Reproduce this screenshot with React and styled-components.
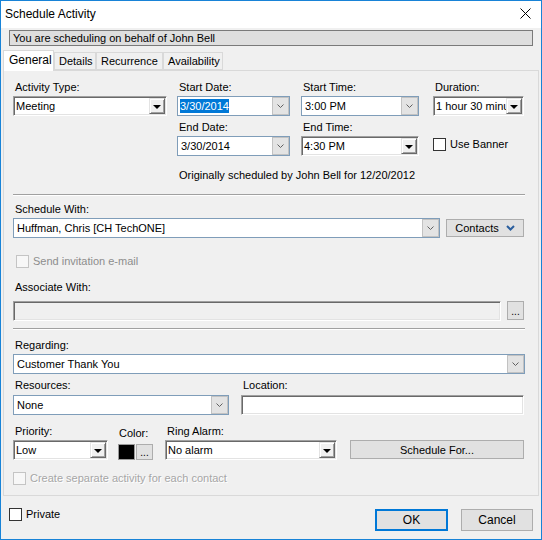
import styled, { createGlobalStyle } from "styled-components";

const GlobalStyle = createGlobalStyle`
  html, body { margin: 0; padding: 0; background: #fff; }
  body {
    font-family: "Liberation Sans", Arial, sans-serif;
    font-size: 11px;
    color: #000;
  }
  * { box-sizing: border-box; }
`;

const Window = styled.div`
  width: 542px;
  height: 540px;
  border: 1px solid #1883d7;
  background: #f0f0f0;
  display: flex;
  flex-direction: column;
  overflow: hidden;
`;

const TitleBar = styled.div`
  height: 27px;
  flex-shrink: 0;
  background: #fff;
  display: flex;
  align-items: center;
  justify-content: space-between;
  padding: 0 10px 2px 4px;
  font-size: 12px;
`;

const Close = styled.div`
  width: 11px;
  height: 11px;
  display: flex;
`;

const Banner = styled.div`
  margin: 2px 8px 0 8px;
  height: 16px;
  border: 1px solid #7a7a7a;
  background: #dedede;
  padding-left: 3px;
  line-height: 14px;
  white-space: nowrap;
`;

const TabStrip = styled.div`
  margin-top: 4px;
  height: 21px;
  padding-left: 2px;
  display: flex;
  align-items: flex-end;
`;

const Tab = styled.div`
  position: relative;
  width: ${(p) => p.$w}px;
  height: ${(p) => (p.$active ? 21 : 18)}px;
  margin-bottom: ${(p) => (p.$active ? 0 : 1)}px;
  border: 1px solid #d9d9d9;
  border-bottom: ${(p) => (p.$active ? "none" : "1px solid #d9d9d9")};
  background: ${(p) => (p.$active ? "#fff" : "#f0f0f0")};
  z-index: ${(p) => (p.$active ? 2 : 0)};
  padding-left: ${(p) => (p.$active ? 5 : 4)}px;
  line-height: ${(p) => (p.$active ? 18 : 16)}px;
  font-size: ${(p) => (p.$active ? 12 : 11)}px;
  white-space: nowrap;
`;

const Panel = styled.div`
  position: relative;
  z-index: 1;
  margin: -1px 2px 0 2px;
  height: 426px;
  flex-shrink: 0;
  border: 1px solid #d9d9d9;
  background: #f0f0f0;
  padding: 9px 13px 0 9px;
`;

const Row = styled.div`
  display: flex;
  align-items: ${(p) => p.$align || "flex-start"};
  margin-top: ${(p) => p.$mt || 0}px;
`;

const Column = styled.div`
  display: flex;
  flex-direction: column;
  width: ${(p) => p.$w}px;
  margin-left: ${(p) => p.$ml || 0}px;
  flex-shrink: 0;
`;

const Label = styled.div`
  height: 14px;
  line-height: 14px;
  padding-left: ${(p) => (p.$pl === undefined ? 2 : p.$pl)}px;
  margin-top: ${(p) => p.$mt || 0}px;
  margin-bottom: ${(p) => (p.$mb === undefined ? 2 : p.$mb)}px;
  white-space: nowrap;
`;

const ClassicBox = styled.div`
  display: flex;
  align-items: stretch;
  width: ${(p) => (p.$w ? `${p.$w}px` : "100%")};
  height: 20px;
  border: 1px solid;
  border-color: #a0a0a0 #fff #fff #a0a0a0;
  box-shadow: inset 1px 1px 0 #696969, inset -1px -1px 0 #e3e3e3;
  background: ${(p) => (p.$disabled ? "#f0f0f0" : "#fff")};
  flex-shrink: 0;
`;

const FieldText = styled.div`
  flex: 1;
  min-width: 0;
  overflow: hidden;
  white-space: nowrap;
  padding-left: ${(p) => p.$pl || 2}px;
  line-height: 18px;
  font-size: ${(p) => p.$fs || 11}px;
`;

const Selected = styled.span`
  background: #0078d7;
  color: #fff;
  padding: 1px 0;
`;

const ClassicArrow = styled.div`
  width: 16px;
  margin: 1px 1px 1px 0;
  background: #f0f0f0;
  border: 1px solid;
  border-color: #e3e3e3 #696969 #696969 #e3e3e3;
  box-shadow: inset 1px 1px 0 #fff, inset -1px -1px 0 #a0a0a0;
  display: flex;
  align-items: center;
  justify-content: center;
  &::after {
    content: "";
    border-left: 4px solid transparent;
    border-right: 4px solid transparent;
    border-top: 4px solid #000;
    margin-top: 1px;
  }
`;

const ModernBox = styled.div`
  display: flex;
  align-items: stretch;
  width: ${(p) => (p.$w ? `${p.$w}px` : "100%")};
  height: 20px;
  border: 1px solid #7f9db9;
  background: #fff;
  flex-shrink: 0;
`;

const ModernArrow = styled.div`
  width: 17px;
  background: #e3e3e3;
  border: 1px solid #c2c2c2;
  margin: 0;
  display: flex;
  align-items: center;
  justify-content: center;
`;

const Button = styled.div`
  width: ${(p) => p.$w}px;
  height: ${(p) => p.$h || 18}px;
  margin-left: ${(p) => p.$ml || 0}px;
  margin-top: ${(p) => p.$mt || 0}px;
  background: #e1e1e1;
  border: ${(p) => (p.$default ? "2px solid #0078d7" : "1px solid #adadad")};
  display: flex;
  align-items: center;
  justify-content: center;
  gap: 7px;
  font-size: ${(p) => p.$fs || 11}px;
  white-space: nowrap;
  flex-shrink: 0;
`;

const Separator = styled.div`
  margin-top: ${(p) => p.$mt || 0}px;
  height: 2px;
  border-top: 1px solid #a0a0a0;
  border-bottom: 1px solid #fff;
`;

const CheckRow = styled.div`
  display: flex;
  align-items: center;
  height: 13px;
  margin-top: ${(p) => p.$mt || 0}px;
  margin-left: ${(p) => p.$ml || 0}px;
  gap: 4px;
  white-space: nowrap;
  color: ${(p) => (p.$disabled ? (p.$emboss ? "#a6a6a6" : "#8d8d8d") : "#000")};
  text-shadow: ${(p) => (p.$emboss ? "1px 1px 0 #fff" : "none")};
  line-height: 13px;
`;

const Box = styled.div`
  width: 13px;
  height: 13px;
  border: 1px solid ${(p) => (p.$disabled ? "#c4c4c4" : "#333")};
  background: ${(p) => (p.$disabled ? "#f7f7f7" : "#fff")};
  flex-shrink: 0;
`;

const Note = styled.div`
  margin-top: 12px;
  padding-left: 166px;
  line-height: 14px;
  height: 14px;
`;

const Swatch = styled.div`
  width: 17px;
  height: 16px;
  background: #000;
  border: 1px solid #9a9a9a;
  margin-top: 2px;
`;

const SmallButton = styled.div`
  width: 17px;
  height: ${(p) => p.$h || 16}px;
  margin-left: ${(p) => p.$ml || 1}px;
  margin-top: ${(p) => p.$mt || 0}px;
  background: #e1e1e1;
  border: 1px solid #adadad;
  display: flex;
  align-items: center;
  justify-content: center;
  font-size: 10px;
  line-height: 1;
  padding-top: 2px;
  flex-shrink: 0;
`;

const Footer = styled.div`
  display: flex;
  align-items: flex-start;
  margin-top: 13px;
  padding: 0 8px;
`;

const Spacer = styled.div`
  flex: 1;
`;

const Chevron = ({ color = "#606060", bold }) => (
  <svg width={bold ? 9 : 7} height={bold ? 6 : 4} viewBox={bold ? "0 0 9 6" : "0 0 7 4"}>
    {bold ? (
      <polyline points="1,1 4.5,4.5 8,1" fill="none" stroke={color} strokeWidth="2" />
    ) : (
      <polyline points="0.5,0.5 3.5,3.5 6.5,0.5" fill="none" stroke={color} strokeWidth="1" />
    )}
  </svg>
);

const ClassicCombo = ({ value, w }) => (
  <ClassicBox $w={w}>
    <FieldText>{value}</FieldText>
    <ClassicArrow />
  </ClassicBox>
);

const ModernCombo = ({ value, w, selected }) => (
  <ModernBox $w={w}>
    <FieldText $pl={selected ? 2 : 3}>{selected ? <Selected>{value}</Selected> : value}</FieldText>
    <ModernArrow>
      <Chevron />
    </ModernArrow>
  </ModernBox>
);

const Check = ({ label, disabled, emboss, mt, ml }) => (
  <CheckRow $disabled={disabled} $emboss={emboss} $mt={mt} $ml={ml}>
    <Box $disabled={disabled} />
    <span>{label}</span>
  </CheckRow>
);

const tabs = [
  { name: "General", w: 51, active: true },
  { name: "Details", w: 42 },
  { name: "Recurrence", w: 67 },
  { name: "Availability", w: 60 },
];

export default function App() {
  return (
    <>
      <GlobalStyle />
      <Window>
        <TitleBar>
          <span>Schedule Activity</span>
          <Close>
            <svg width="11" height="11" viewBox="0 0 11 11">
              <path d="M0.5 0.5 L10.5 10.5 M10.5 0.5 L0.5 10.5" stroke="#000" strokeWidth="1" />
            </svg>
          </Close>
        </TitleBar>

        <Banner>You are scheduling on behalf of John Bell</Banner>

        <TabStrip>
          {tabs.map((t) => (
            <Tab key={t.name} $w={t.w} $active={t.active}>
              {t.name}
            </Tab>
          ))}
        </TabStrip>

        <Panel>
          <Row>
            <Column $w={154}>
              <Label>Activity Type:</Label>
              <ClassicCombo value="Meeting" />
            </Column>
            <Column $w={113} $ml={10}>
              <Label>Start Date:</Label>
              <ModernCombo value="3/30/2014" selected />
              <Label $mt={4}>End Date:</Label>
              <ModernCombo value="3/30/2014" />
            </Column>
            <Column $w={118} $ml={11}>
              <Label>Start Time:</Label>
              <ModernCombo value="3:00 PM" />
              <Label $mt={4}>End Time:</Label>
              <ClassicCombo value="4:30 PM" />
            </Column>
            <Column $w={91} $ml={14}>
              <Label>Duration:</Label>
              <ClassicCombo value="1 hour 30 minu" />
              <Check label="Use Banner" mt={22} />
            </Column>
          </Row>

          <Note>Originally scheduled by John Bell for 12/20/2012</Note>
          <Separator $mt={12} />

          <Label $mt={6}>Schedule With:</Label>
          <Row>
            <ModernCombo value="Huffman, Chris [CH TechONE]" w={427} />
            <Button $w={78} $ml={6} $mt={1}>
              Contacts
              <Chevron color="#2b5f9e" bold />
            </Button>
          </Row>

          <Check label="Send invitation e-mail" disabled mt={17} ml={3} />

          <Label $mt={12} $mb={7}>Associate With:</Label>
          <Row>
            <ClassicBox $w={488} $disabled />
            <SmallButton $ml={6} $h={19}>...</SmallButton>
          </Row>

          <Separator $mt={7} />

          <Label $mt={8}>Regarding:</Label>
          <ModernCombo value="Customer Thank You" />

          <Row $mt={4}>
            <Column $w={216}>
              <Label $mb={3}>Resources:</Label>
              <ModernCombo value=" None" />
            </Column>
            <Column $w={283} $ml={12}>
              <Label $mb={3}>Location:</Label>
              <ClassicBox />
            </Column>
          </Row>

          <Row $mt={9} $align="flex-end">
            <Column $w={95}>
              <Label>Priority:</Label>
              <ClassicCombo value="Low" />
            </Column>
            <Column $w={35} $ml={10}>
              <Label $pl={1}>Color:</Label>
              <Row>
                <Swatch />
                <SmallButton $mt={2}>...</SmallButton>
              </Row>
            </Column>
            <Column $w={172} $ml={12}>
              <Label>Ring Alarm:</Label>
              <ClassicCombo value="No alarm" />
            </Column>
            <Button $w={174} $h={19} $ml={13} style={{ marginBottom: 1 }}>
              Schedule For...
            </Button>
          </Row>

          <Check label="Create separate activity for each contact" disabled emboss mt={12} />
        </Panel>

        <Footer>
          <Check label="Private" mt={-1} />
          <Spacer />
          <Button $w={73} $h={22} $default $fs={12}>
            OK
          </Button>
          <Button $w={72} $h={22} $ml={13} $fs={12}>
            Cancel
          </Button>
        </Footer>
      </Window>
    </>
  );
}
